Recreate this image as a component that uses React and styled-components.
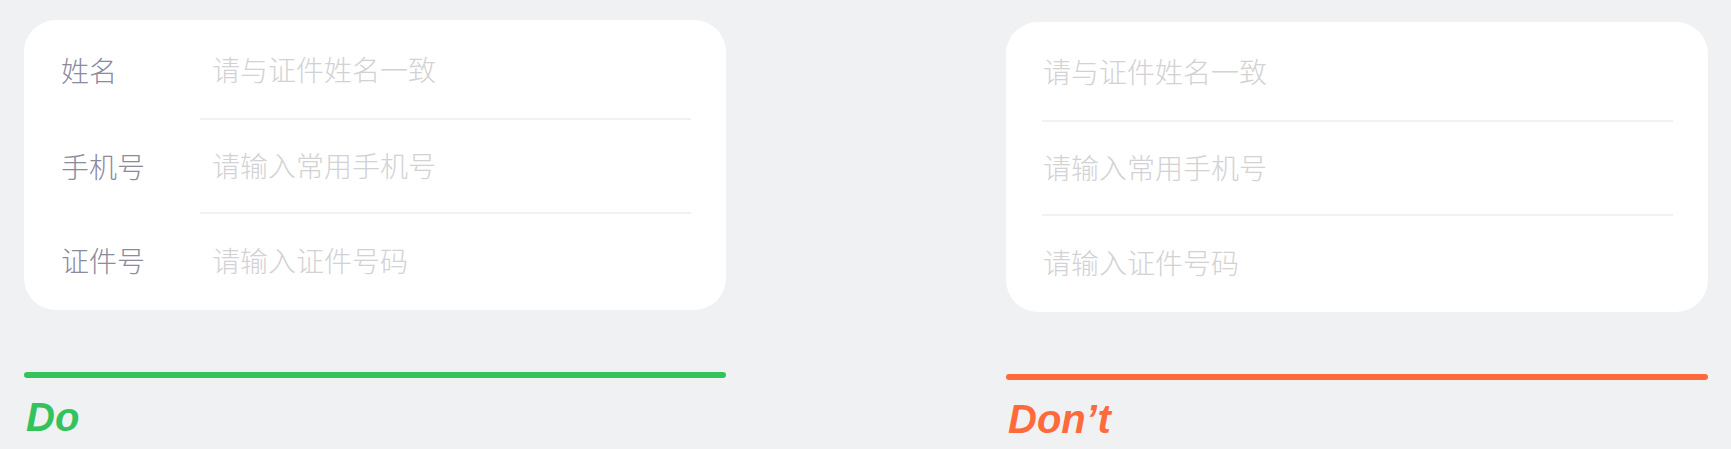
import React from 'react';
import styled, { createGlobalStyle } from 'styled-components';

const GlobalStyle = createGlobalStyle`
    html, body {
        margin: 0;
        padding: 0;
        background: #f0f1f3;
    }
    body {
        font-family: "Noto Sans CJK SC", "Noto Sans", sans-serif;
    }
`;

const Page = styled.div`
    display: flex;
    gap: 280px;
    padding: 20px 22px 0 24px;
    width: 1731px;
    height: 449px;
    box-sizing: border-box;
`;

const Column = styled.div`
    width: 702px;
    margin-top: ${props => props.$offset || 0}px;
    display: flex;
    flex-direction: column;
`;

const Card = styled.div`
    background: #ffffff;
    border-radius: 32px;
    padding: 2px 35px 0 ${props => props.$withLabels ? 37 : 36}px;
    height: 290px;
    box-sizing: border-box;
`;

const Row = styled.div`
    display: flex;
    height: 94px;
    &:first-child {
        height: 98px;
    }
`;

const Label = styled.span`
    width: 139px;
    flex-shrink: 0;
    display: flex;
    align-items: center;
    padding-bottom: 3px;
    font-size: 28px;
    font-weight: 300;
    color: #8b8a9f;
`;

const Field = styled.div`
    flex: 1;
    display: flex;
    align-items: center;
    padding-bottom: 3px;
    border-bottom: ${props => props.$last ? 'none' : '2px solid #f1f1f2'};
    padding-left: ${props => props.$withLabels ? 12 : 1}px;
    font-size: 28px;
    font-weight: 300;
    color: #d2d2d4;
`;

const Bar = styled.div`
    height: 6px;
    border-radius: 3px;
    margin-top: 62px;
    background: ${props => props.$color};
`;

const Verdict = styled.div`
    margin-top: 15px;
    padding-left: ${props => props.$indent}px;
    font-family: "Liberation Sans", Arial, sans-serif;
    font-weight: 700;
    font-style: italic;
    font-size: 40px;
    line-height: 48px;
    color: ${props => props.$color};
`;

const fields = [
    { label: '姓名', placeholder: '请与证件姓名一致' },
    { label: '手机号', placeholder: '请输入常用手机号' },
    { label: '证件号', placeholder: '请输入证件号码' },
];

function FormCard({ withLabels }) {
    return (
        <Card $withLabels={withLabels}>
            {fields.map((f, i) => (
                <Row key={f.label}>
                    {withLabels && <Label>{f.label}</Label>}
                    <Field $withLabels={withLabels} $last={i === fields.length - 1}>
                        {f.placeholder}
                    </Field>
                </Row>
            ))}
        </Card>
    );
}

export default function App() {
    return (
        <>
            <GlobalStyle />
            <Page>
                <Column>
                    <FormCard withLabels />
                    <Bar $color="#34c35b" />
                    <Verdict $color="#34c35b" $indent={2}>Do</Verdict>
                </Column>
                <Column $offset={2}>
                    <FormCard />
                    <Bar $color="#ff6a3b" />
                    <Verdict $color="#ff6a3b" $indent={2}>Don’t</Verdict>
                </Column>
            </Page>
        </>
    );
}
